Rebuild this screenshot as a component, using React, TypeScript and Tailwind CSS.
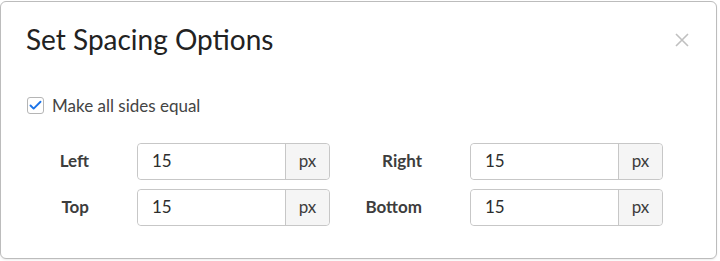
import { Check } from "lucide-react";

type Field = { label: string; value: string };

function SpacingInput({ label, value }: Field) {
  return (
    <div className="flex items-center">
      <div className="w-[63px] text-right text-[17px] font-bold text-[#3d3d3d]">{label}</div>
      <div className="ml-[48px] flex h-[37px] w-[193px] rounded-[4px] border border-[#c7c7c7]">
        <input
          readOnly
          value={value}
          className="min-w-0 flex-1 rounded-l-[4px] bg-white pl-[14px] text-[17px] text-[#2d2d2d] outline-none"
        />
        <div className="flex w-[44px] items-center justify-center rounded-r-[4px] border-l border-[#c7c7c7] bg-[#f5f5f5] text-[17px] text-[#3d3d3d]">
          px
        </div>
      </div>
    </div>
  );
}

export default function App() {
  const rows: [Field, Field][] = [
    [
      { label: "Left", value: "15" },
      { label: "Right", value: "15" },
    ],
    [
      { label: "Top", value: "15" },
      { label: "Bottom", value: "15" },
    ],
  ];

  return (
    <div className="h-[261px] w-[720px] bg-white font-['Lato',sans-serif]">
      <div className="relative mt-px h-[258px] w-[717px] rounded-[6px] border border-[#bcbcbc] bg-white shadow-[0_1px_2px_rgba(0,0,0,0.08)]">
        {/* Header */}
        <div className="flex items-start justify-between pl-[25px] pr-[27px] pt-[18px]">
          <h2 className="text-[28px] leading-[38px] text-[#222]">Set Spacing Options</h2>
          <button className="mt-[13px] text-[#c0c0c0]">
            <svg width="14" height="14" viewBox="0 0 14 14" fill="none" stroke="currentColor" strokeWidth="1.6">
              <path d="M1 1 L13 13 M13 1 L1 13" />
            </svg>
          </button>
        </div>

        {/* Checkbox */}
        <label className="ml-[26px] mt-[35px] flex items-center gap-[8px]">
          <span className="flex h-[17px] w-[17px] items-center justify-center rounded-[3px] border border-[#b5b5b5] bg-white">
            <Check className="h-[15px] w-[15px] text-[#1a73e8]" strokeWidth={3} />
          </span>
          <span className="text-[17px] text-[#444]">Make all sides equal</span>
        </label>

        {/* Fields */}
        <div className="ml-[25px] mt-[24px] flex flex-col gap-[9px]">
          {rows.map((row, i) => (
            <div key={i} className="flex gap-[29px]">
              {row.map((f) => (
                <SpacingInput key={f.label} {...f} />
              ))}
            </div>
          ))}
        </div>
      </div>
    </div>
  );
}
